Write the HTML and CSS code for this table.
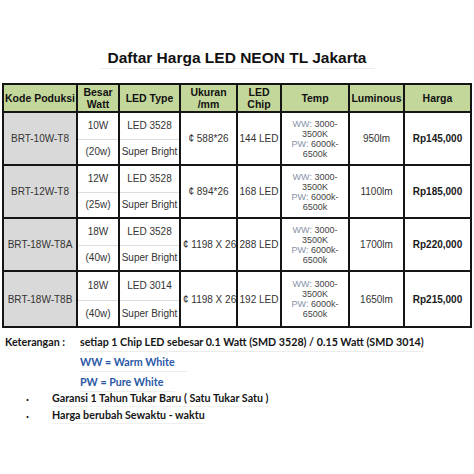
FILE: index.html
```
<!DOCTYPE html>
<html>
<head>
<meta charset="utf-8">
<link rel="stylesheet" href="styles.css">
</head>
<body>
<div class="page">
  <div class="title"><span>Daftar Harga LED NEON TL Jakarta</span></div>
  <table class="price">
    <colgroup>
      <col class="c1"><col class="c2"><col class="c3"><col class="c4"><col class="c5"><col class="c6"><col class="c7"><col class="c8">
    </colgroup>
    <thead>
      <tr>
        <th>Kode Poduksi</th><th>Besar<br>Watt</th><th>LED Type</th><th>Ukuran<br>/mm</th><th>LED<br>Chip</th><th>Temp</th><th>Luminous</th><th>Harga</th>
      </tr>
    </thead>
    <tbody>
      <tr class="r1a">
        <td rowspan="2" class="code">BRT-10W-T8</td><td class="st">10W</td><td class="st">LED 3528</td>
        <td rowspan="2" class="size">¢ 588*26</td><td rowspan="2">144 LED</td>
        <td rowspan="2" class="temp"><span class="k">WW:</span> 3000-<br>3500K<br><span class="k">PW:</span> 6000k-<br>6500k</td>
        <td rowspan="2">950lm</td><td rowspan="2" class="price-v">Rp145,000</td>
      </tr>
      <tr class="r1b"><td class="sb">(20w)</td><td class="sb">Super Bright</td></tr>
      <tr class="r2a">
        <td rowspan="2" class="code">BRT-12W-T8</td><td class="st">12W</td><td class="st">LED 3528</td>
        <td rowspan="2" class="size">¢ 894*26</td><td rowspan="2">168 LED</td>
        <td rowspan="2" class="temp"><span class="k">WW:</span> 3000-<br>3500K<br><span class="k">PW:</span> 6000k-<br>6500k</td>
        <td rowspan="2">1100lm</td><td rowspan="2" class="price-v">Rp185,000</td>
      </tr>
      <tr class="r2b"><td class="sb">(25w)</td><td class="sb">Super Bright</td></tr>
      <tr class="r3a">
        <td rowspan="2" class="code">BRT-18W-T8A</td><td class="st">18W</td><td class="st">LED 3528</td>
        <td rowspan="2" class="size wide">¢ 1198 X 26</td><td rowspan="2">288 LED</td>
        <td rowspan="2" class="temp"><span class="k">WW:</span> 3000-<br>3500K<br><span class="k">PW:</span> 6000k-<br>6500k</td>
        <td rowspan="2">1700lm</td><td rowspan="2" class="price-v">Rp220,000</td>
      </tr>
      <tr class="r3b"><td class="sb">(40w)</td><td class="sb">Super Bright</td></tr>
      <tr class="r4a">
        <td rowspan="2" class="code">BRT-18W-T8B</td><td class="st">18W</td><td class="st">LED 3014</td>
        <td rowspan="2" class="size wide">¢ 1198 X 26</td><td rowspan="2">192 LED</td>
        <td rowspan="2" class="temp"><span class="k">WW:</span> 3000-<br>3500K<br><span class="k">PW:</span> 6000k-<br>6500k</td>
        <td rowspan="2">1650lm</td><td rowspan="2" class="price-v">Rp215,000</td>
      </tr>
      <tr class="r4b"><td class="sb">(40w)</td><td class="sb">Super Bright</td></tr>
    </tbody>
  </table>

  <div class="notes">
    <div class="label">Keterangan :</div>
    <div class="note-line">setiap 1 Chip LED sebesar 0.1 Watt (SMD 3528) / 0.15 Watt (SMD 3014)</div>
    <div></div>
    <div class="note-line blue"><span>WW = Warm White</span></div>
    <div></div>
    <div class="note-line blue"><span>PW = Pure White</span></div>
  </div>
  <ul class="bullets">
    <li><span class="dot">·</span><span class="btext">Garansi 1 Tahun Tukar Baru ( Satu Tukar Satu )</span></li>
    <li><span class="dot">·</span><span class="btext">Harga berubah Sewaktu - waktu</span></li>
  </ul>
</div>
</body>
</html>
```
FILE: styles.css
```
html, body {
  margin: 0;
  padding: 0;
  background: #ffffff;
}
body {
  font-family: "Liberation Sans", Arial, sans-serif;
  color: #222;
}
.page {
  width: 474px;
  height: 474px;
  overflow: hidden;
}
.title {
  padding-top: 48px;
  text-align: center;
  margin-bottom: 14px;
}
.title span {
  display: inline-block;
  font-weight: bold;
  font-size: 15.5px;
  line-height: 19px;
  color: #111;
  padding: 0 8px 1px;
  border-bottom: 1px solid #ececec;
}
.price {
  border-collapse: collapse;
  table-layout: fixed;
  width: 470px;
  margin-left: 2px;
}
.c1 { width: 74px; }
.c2 { width: 42px; }
.c3 { width: 61px; }
.c4 { width: 57px; }
.c5 { width: 44px; }
.c6 { width: 68px; }
.c7 { width: 55px; }
.c8 { width: 67px; }
.price th,
.price td {
  border: 2px solid #151515;
  padding: 0;
  text-align: center;
  vertical-align: middle;
  white-space: nowrap;
  overflow: hidden;
}
.price th {
  background: #c4d79b;
  font-size: 10.5px;
  line-height: 12px;
  font-weight: bold;
  color: #111;
  height: 26px;
}
.price td {
  font-size: 10px;
  color: #333;
}
.price td.code {
  background: #d9d9d9;
}
.price td.st {
  border-bottom: 1px solid #dedede;
}
.price td.sb {
  border-top: 1px solid #dedede;
}
.r1a, .r2a, .r3a { height: 27px; }
.r1b, .r2b, .r3b { height: 26px; }
.r4a { height: 29px; }
.r4b { height: 27px; }
.price td.size.wide {
  text-align: left;
  padding-left: 2px;
}
.price td.temp {
  font-size: 9px;
  line-height: 10px;
  color: #444;
}
.temp .k {
  color: #8791a8;
}
.price td.price-v {
  font-weight: bold;
  color: #1a1a1a;
}
.notes {
  display: grid;
  grid-template-columns: 75px auto;
  padding-left: 5px;
  margin-top: 4px;
  font-family: Lato, "Liberation Sans", sans-serif;
  font-weight: bold;
  font-size: 10.7px;
  line-height: 20px;
  color: #151515;
  justify-items: start;
}
.note-line {
  border-bottom: 1px solid #ececec;
  line-height: 19px;
}
.note-line.blue {
  color: #2a58a6;
  padding-right: 12px;
}
.bullets {
  list-style: none;
  margin: -2px 0 0 0;
  padding: 0 0 0 26px;
  font-family: Lato, "Liberation Sans", sans-serif;
  font-weight: bold;
  font-size: 10.7px;
  line-height: 17px;
  color: #151515;
}
.bullets li {
  display: flex;
}
.dot {
  width: 26px;
}
.btext {
  border-bottom: 1px solid #f0f0f0;
  line-height: 16px;
}
```
